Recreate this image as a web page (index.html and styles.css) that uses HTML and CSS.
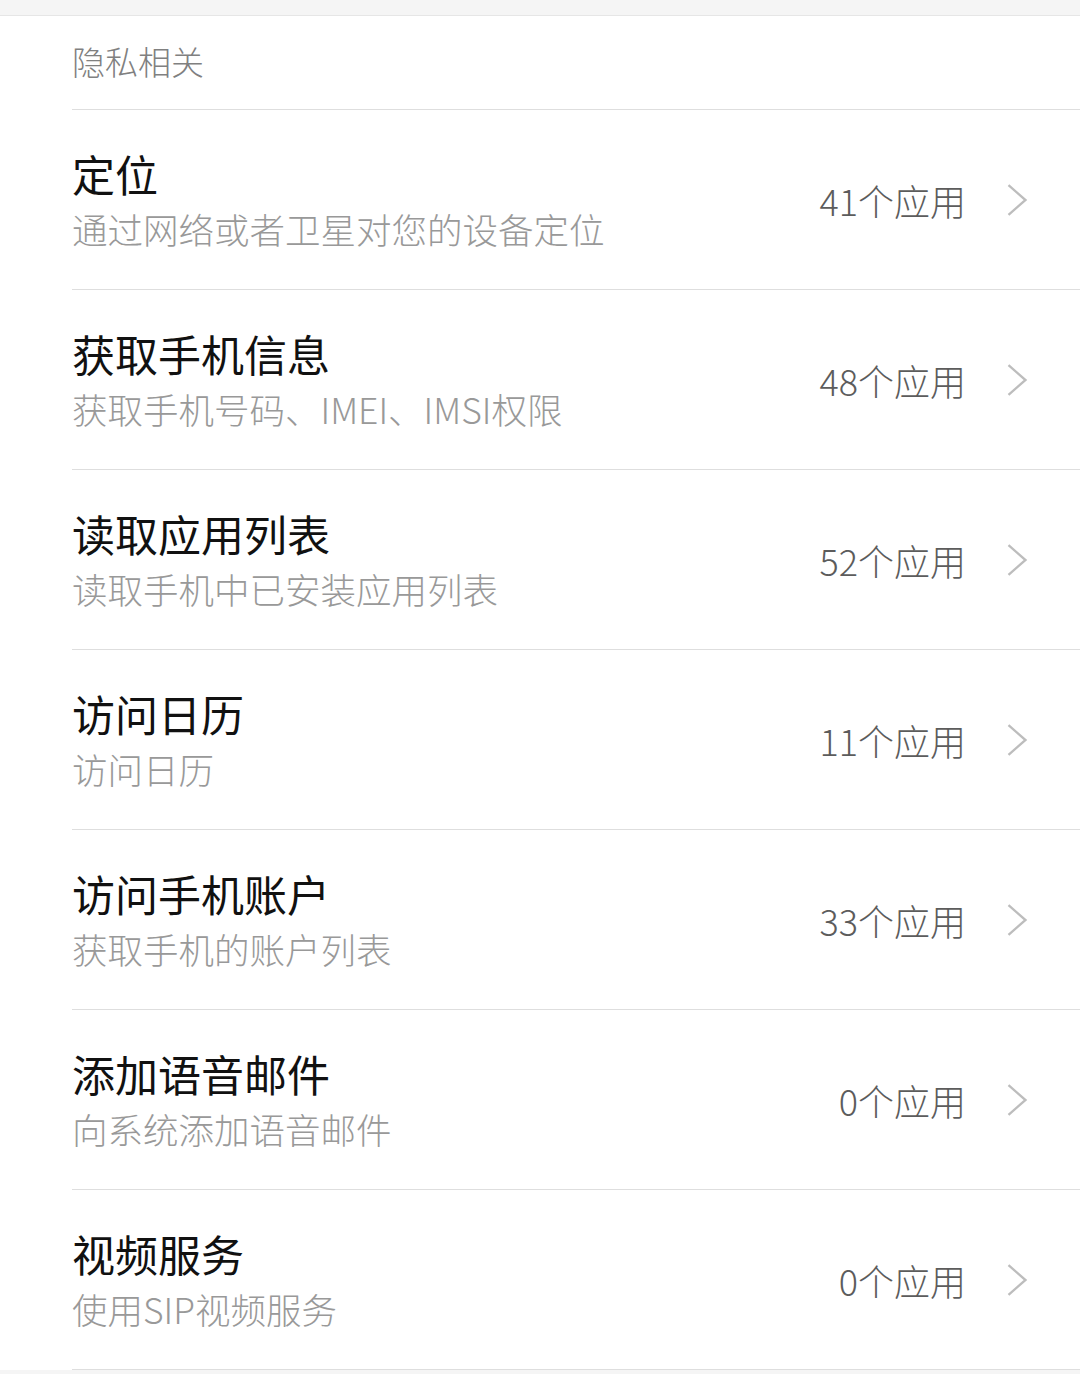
FILE: index.html
```html
<!DOCTYPE html>
<html lang="zh-CN">
<head>
<meta charset="utf-8">
<link rel="stylesheet" href="styles.css">
</head>
<body>
<div class="topbar"></div>
<div class="section">
  <div class="section-title">隐私相关</div>
  <div class="list">
    <div class="row">
      <div class="texts"><div class="title">定位</div><div class="sub">通过网络或者卫星对您的设备定位</div></div>
      <div class="value">41个应用</div>
      <svg class="chev" viewBox="0 0 20 32"><polyline points="2,2 18,16 2,30"/></svg>
    </div>
    <div class="row">
      <div class="texts"><div class="title">获取手机信息</div><div class="sub">获取手机号码、IMEI、IMSI权限</div></div>
      <div class="value">48个应用</div>
      <svg class="chev" viewBox="0 0 20 32"><polyline points="2,2 18,16 2,30"/></svg>
    </div>
    <div class="row">
      <div class="texts"><div class="title">读取应用列表</div><div class="sub">读取手机中已安装应用列表</div></div>
      <div class="value">52个应用</div>
      <svg class="chev" viewBox="0 0 20 32"><polyline points="2,2 18,16 2,30"/></svg>
    </div>
    <div class="row">
      <div class="texts"><div class="title">访问日历</div><div class="sub">访问日历</div></div>
      <div class="value">11个应用</div>
      <svg class="chev" viewBox="0 0 20 32"><polyline points="2,2 18,16 2,30"/></svg>
    </div>
    <div class="row">
      <div class="texts"><div class="title">访问手机账户</div><div class="sub">获取手机的账户列表</div></div>
      <div class="value">33个应用</div>
      <svg class="chev" viewBox="0 0 20 32"><polyline points="2,2 18,16 2,30"/></svg>
    </div>
    <div class="row">
      <div class="texts"><div class="title">添加语音邮件</div><div class="sub">向系统添加语音邮件</div></div>
      <div class="value">0个应用</div>
      <svg class="chev" viewBox="0 0 20 32"><polyline points="2,2 18,16 2,30"/></svg>
    </div>
    <div class="row last">
      <div class="texts"><div class="title">视频服务</div><div class="sub">使用SIP视频服务</div></div>
      <div class="value">0个应用</div>
      <svg class="chev" viewBox="0 0 20 32"><polyline points="2,2 18,16 2,30"/></svg>
    </div>
  </div>
</div>
<div class="bottombar"></div>
</body>
</html>
```
FILE: styles.css
```css
html, body {
  margin: 0;
  padding: 0;
  background: #ffffff;
}
body {
  font-family: "Noto Sans CJK SC", "Noto Sans", sans-serif;
  width: 1080px;
  height: 1374px;
  overflow: hidden;
}
.topbar {
  height: 15px;
  background: #f5f5f5;
  border-bottom: 1px solid #e6e6e6;
}
.section {
  padding-left: 72px;
}
.section-title {
  height: 94px;
  border-bottom: 1px solid #dedede;
  font-size: 33px;
  font-weight: 300;
  color: #808080;
  line-height: 33px;
  display: flex;
  align-items: center;
  box-sizing: border-box;
  padding-bottom: 3px;
}
.row {
  height: 179px;
  border-bottom: 1px solid #dedede;
  display: flex;
  align-items: center;
  padding-right: 52px;
}
.texts {
  flex: 1;
  padding-top: 2px;
}
.title {
  font-size: 43px;
  line-height: 54px;
  color: #111111;
  font-weight: 400;
}
.sub {
  font-size: 35.5px;
  line-height: 54px;
  margin-top: 2px;
  color: #999999;
  font-weight: 300;
}
.value {
  font-size: 36px;
  color: #5c5c5c;
  font-weight: 300;
  margin-right: 40px;
}
.chev {
  width: 22px;
  height: 34px;
  fill: none;
  stroke: #bdbdbd;
  stroke-width: 2.2;
}
.bottombar {
  height: 5px;
  background: #f5f5f5;
}
```
